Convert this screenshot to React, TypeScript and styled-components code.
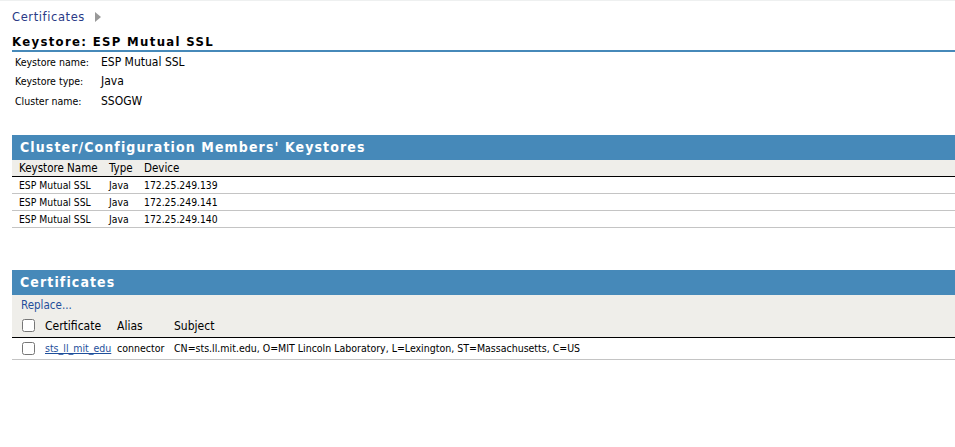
import { createGlobalStyle, styled } from "styled-components"

const GlobalStyle = createGlobalStyle`
  html, body {
    margin: 0;
    padding: 0;
    background: #ffffff;
  }
  body {
    font-family: "DejaVu Sans Condensed", "Liberation Sans", sans-serif;
    font-stretch: condensed;
    color: #000000;
  }
`

const Page = styled.div`
  width: 955px;
  height: 447px;
  border-top: 1px solid #eef0f0;
  box-sizing: border-box;
  padding-left: 12px;
  overflow: hidden;
`

const Breadcrumb = styled.div`
  display: flex;
  align-items: center;
  gap: 10px;
  height: 31px;
  font-family: "DejaVu Sans", sans-serif;
  font-stretch: normal;
  font-size: 11.5px;
  letter-spacing: 0.6px;
  color: #2a3a86;
`

const Arrow = styled.span`
  width: 0;
  height: 0;
  border-top: 5px solid transparent;
  border-bottom: 5px solid transparent;
  border-left: 6px solid #999999;
`

const Title = styled.h1`
  margin: 0;
  padding: 2px 0 1px;
  font-size: 13px;
  font-weight: bold;
  letter-spacing: 1.33px;
  line-height: 15px;
  border-bottom: 2px solid #4689b9;
`

const InfoList = styled.div`
  display: grid;
  grid-template-columns: 86px 1fr;
  grid-auto-rows: 19.5px;
  align-items: center;
  padding: 0 0 0 3px;
`

const InfoLabel = styled.div`
  font-size: 10.5px;
`

const InfoValue = styled.div`
  font-size: 12px;
`

const Panel = styled.section<{ $top: number }>`
  margin-top: ${p => p.$top}px;
`

const PanelHeader = styled.h2`
  margin: 0;
  height: 25px;
  line-height: 25px;
  padding-left: 8px;
  background: #4689b9;
  color: #ffffff;
  font-size: 14px;
  font-weight: bold;
  letter-spacing: 1.1px;
`

const HeadArea = styled.div`
  background: #efeeea;
  border-bottom: 1px solid #000000;
`

const Row = styled.div<{ $cols: string }>`
  display: grid;
  grid-template-columns: ${p => p.$cols};
  align-items: center;
`

const HeadRow = styled(Row)`
  height: 16px;
  padding-left: 7px;
  font-size: 11.5px;
`

const DataRow = styled(Row)`
  height: 16px;
  padding-left: 7px;
  font-size: 10.3px;
  border-bottom: 1px solid #c4c4c4;
`

const ReplaceLink = styled.a`
  display: block;
  padding: 3px 0 0 9px;
  height: 17px;
  font-size: 11.5px;
  color: #1f4f9b;
  text-decoration: none;
`

const CertHeadRow = styled(Row)`
  height: 22px;
  padding-left: 10px;
  font-size: 12px;
`

const CertDataRow = styled(Row)`
  height: 21px;
  padding-left: 10px;
  font-size: 10.5px;
  border-bottom: 1px solid #c4c4c4;
`

const Check = styled.input.attrs({ type: "checkbox" })`
  margin: 0;
  width: 13px;
  height: 13px;
`

const CertLink = styled.a`
  color: #1f4f9b;
  text-decoration: underline;
  white-space: nowrap;
`

const members = [
  { name: "ESP Mutual SSL", type: "Java", device: "172.25.249.139" },
  { name: "ESP Mutual SSL", type: "Java", device: "172.25.249.141" },
  { name: "ESP Mutual SSL", type: "Java", device: "172.25.249.140" },
]

const memberCols = "90px 35px 1fr"
const certCols = "23px 72px 57px 1fr"

export default function App() {
  return (
    <>
      <GlobalStyle />
      <Page>
        <Breadcrumb>
          <span>Certificates</span>
          <Arrow />
        </Breadcrumb>
        <Title>Keystore: ESP Mutual SSL</Title>
        <InfoList>
          <InfoLabel>Keystore name:</InfoLabel>
          <InfoValue>ESP Mutual SSL</InfoValue>
          <InfoLabel>Keystore type:</InfoLabel>
          <InfoValue>Java</InfoValue>
          <InfoLabel>Cluster name:</InfoLabel>
          <InfoValue>SSOGW</InfoValue>
        </InfoList>

        <Panel $top={24}>
          <PanelHeader>Cluster/Configuration Members' Keystores</PanelHeader>
          <HeadArea>
            <HeadRow $cols={memberCols}>
              <span>Keystore Name</span>
              <span>Type</span>
              <span>Device</span>
            </HeadRow>
          </HeadArea>
          {members.map(m => (
            <DataRow $cols={memberCols} key={m.device}>
              <span>{m.name}</span>
              <span>{m.type}</span>
              <span>{m.device}</span>
            </DataRow>
          ))}
        </Panel>

        <Panel $top={42}>
          <PanelHeader>Certificates</PanelHeader>
          <HeadArea>
            <ReplaceLink href="#">Replace...</ReplaceLink>
            <CertHeadRow $cols={certCols}>
              <Check />
              <span>Certificate</span>
              <span>Alias</span>
              <span>Subject</span>
            </CertHeadRow>
          </HeadArea>
          <CertDataRow $cols={certCols}>
            <Check />
            <CertLink href="#">sts_ll_mit_edu</CertLink>
            <span>connector</span>
            <span>CN=sts.ll.mit.edu, O=MIT Lincoln Laboratory, L=Lexington, ST=Massachusetts, C=US</span>
          </CertDataRow>
        </Panel>
      </Page>
    </>
  )
}
